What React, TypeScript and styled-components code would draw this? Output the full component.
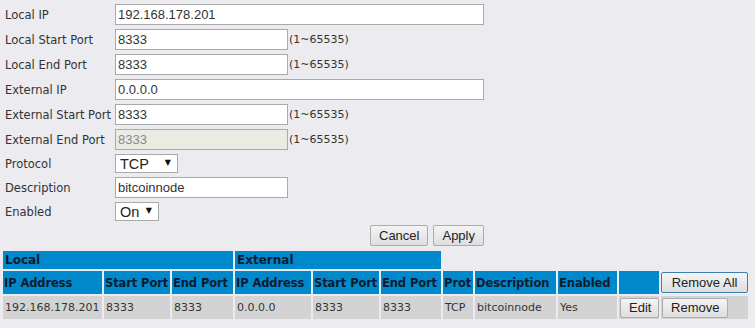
import styled, { createGlobalStyle } from "styled-components";

const GlobalStyle = createGlobalStyle`
    body {
        margin : 0;
        background : #ebebf0;
        font-family : "DejaVu Sans", Verdana, sans-serif;
        font-size : 11px;
        color : #333;
    }
`;

const fields = [
    { label: "Local IP", value: "192.168.178.201", wide: true },
    { label: "Local Start Port", value: "8333", range: true },
    { label: "Local End Port", value: "8333", range: true },
    { label: "External IP", value: "0.0.0.0", wide: true },
    { label: "External Start Port", value: "8333", range: true },
    { label: "External End Port", value: "8333", range: true, disabled: true },
];

const colWidths = [99, 66, 61, 76, 66, 60, 30, 81, 59, 40, 87];
const headers = ["IP Address", "Start Port", "End Port", "IP Address", "Start Port", "End Port", "Prot", "Description", "Enabled"];
const rowData = ["192.168.178.201", "8333", "8333", "0.0.0.0", "8333", "8333", "TCP", "bitcoinnode", "Yes"];

const App = () => {
    return (
        <StPage>
            <GlobalStyle />
            <StForm>
                {fields.map((f) => (
                    <StRow key={f.label} $tall>
                        <StLabel>{f.label}</StLabel>
                        <StInput defaultValue={f.value} disabled={f.disabled} $wide={f.wide} />
                        {f.range && <StHint>(1~65535)</StHint>}
                    </StRow>
                ))}
                <StRow>
                    <StLabel>Protocol</StLabel>
                    <StSelectWrap $w={63}>
                        <StSelect defaultValue="TCP">
                            <option>TCP</option>
                            <option>UDP</option>
                            <option>Both</option>
                        </StSelect>
                        <StArrow>▼</StArrow>
                    </StSelectWrap>
                </StRow>
                <StRow $tall>
                    <StLabel>Description</StLabel>
                    <StInput defaultValue="bitcoinnode" />
                </StRow>
                <StRow>
                    <StLabel>Enabled</StLabel>
                    <StSelectWrap $w={44}>
                        <StSelect defaultValue="On">
                            <option>On</option>
                            <option>Off</option>
                        </StSelect>
                        <StArrow>▼</StArrow>
                    </StSelectWrap>
                </StRow>
                <StActions>
                    <StButton>Cancel</StButton>
                    <StButton>Apply</StButton>
                </StActions>
            </StForm>

            <StTable>
                <colgroup>
                    {colWidths.map((w, i) => <col key={i} style={{ width: w }} />)}
                </colgroup>
                <tbody>
                    <tr>
                        <StTitleCell colSpan={3}>Local</StTitleCell>
                        <StTitleCell colSpan={3}>External</StTitleCell>
                        <td colSpan={5} />
                    </tr>
                    <tr>
                        {headers.map((h, i) => <StHeadCell key={i}>{h}</StHeadCell>)}
                        <StHeadCell />
                        <StButtonCell>
                            <StButton $focus $full>Remove All</StButton>
                        </StButtonCell>
                    </tr>
                    <tr>
                        {rowData.map((d, i) => <StDataCell key={i}>{d}</StDataCell>)}
                        <StDataCell $btn>
                            <StButton $small $full>Edit</StButton>
                        </StDataCell>
                        <StDataCell $btn>
                            <StButton $small>Remove</StButton>
                        </StDataCell>
                    </tr>
                </tbody>
            </StTable>
        </StPage>
    );
};

export default App;

const StPage = styled.div`
    width : 755px;
    height : 328px;
    overflow : hidden;
`

const StForm = styled.div`
    padding : 2px 0 0 5px;
    width : 479px;
`

const StRow = styled.div<{ $tall?: boolean }>`
    display : flex;
    align-items : center;
    height : ${(p) => (p.$tall ? "25px" : "23px")};
`

const StLabel = styled.div`
    width : 110px;
    flex-shrink : 0;
    color : #333;
    font-size : 11.5px;
    white-space : nowrap;
`

const StInput = styled.input<{ $wide?: boolean }>`
    box-sizing : border-box;
    width : ${(p) => (p.$wide ? "369px" : "173px")};
    height : 21px;
    margin : 0;
    padding : 0 2px;
    border : 1px solid #a9a9a9;
    background : #fff;
    font-family : "Liberation Sans", Arial, sans-serif;
    font-size : 13px;
    color : #333;
    outline : none;
    &:disabled {
        background : #ebebe4;
        color : #8a8a8a;
    }
`

const StHint = styled.span`
    margin-left : 1px;
    color : #333;
`

const StSelectWrap = styled.div<{ $w: number }>`
    position : relative;
    width : ${(p) => p.$w}px;
    height : 19px;
`

const StSelect = styled.select`
    appearance : none;
    box-sizing : border-box;
    width : 100%;
    height : 100%;
    margin : 0;
    padding : 0 0 0 4px;
    border : 1px solid #a9a9a9;
    border-radius : 0;
    background : #fff;
    font-family : "Liberation Sans", Arial, sans-serif;
    font-size : 14.5px;
    color : #222;
    outline : none;
`

const StArrow = styled.span`
    position : absolute;
    right : 7px;
    top : 4px;
    font-size : 8px;
    line-height : 10px;
    color : #111;
    pointer-events : none;
`

const StActions = styled.div`
    display : flex;
    justify-content : flex-end;
    gap : 5px;
    margin-top : 2px;
`

const StButton = styled.button<{ $focus?: boolean; $small?: boolean; $full?: boolean }>`
    box-sizing : border-box;
    height : ${(p) => (p.$small ? "20px" : "21px")};
    width : ${(p) => (p.$full ? "100%" : "auto")};
    margin : 0;
    padding : 0 8px;
    border : 1px solid ${(p) => (p.$focus ? "#3c7fb1" : "#acacac")};
    border-radius : 2px;
    background : linear-gradient(#f4f4f4, #dedede);
    font-family : "Liberation Sans", Arial, sans-serif;
    font-size : 13px;
    color : #222;
    display : block;
`

const StTable = styled.table`
    margin : 3px 0 0 1px;
    border-collapse : separate;
    border-spacing : 2px;
    table-layout : fixed;
    width : 749px;
    td {
        padding : 0;
        overflow : hidden;
        white-space : nowrap;
    }
`

const StTitleCell = styled.td`
    height : 18px;
    background : #0088cc;
    color : #0c1c30;
    font-weight : bold;
    font-size : 12px;
    padding-left : 2px !important;
`

const StHeadCell = styled.td`
    height : 23px;
    background : #0088cc;
    color : #0c1c30;
    font-weight : bold;
    font-size : 11.5px;
    letter-spacing : -0.1px;
    padding-left : 1px !important;
`

const StButtonCell = styled.td`
    height : 23px;
    vertical-align : middle;
`

const StDataCell = styled.td<{ $btn?: boolean }>`
    height : 23px;
    background : #d3d3d3;
    color : #333;
    font-size : 11px;
    padding-left : ${(p) => (p.$btn ? "1px" : "2px")} !important;
    vertical-align : middle;
`
